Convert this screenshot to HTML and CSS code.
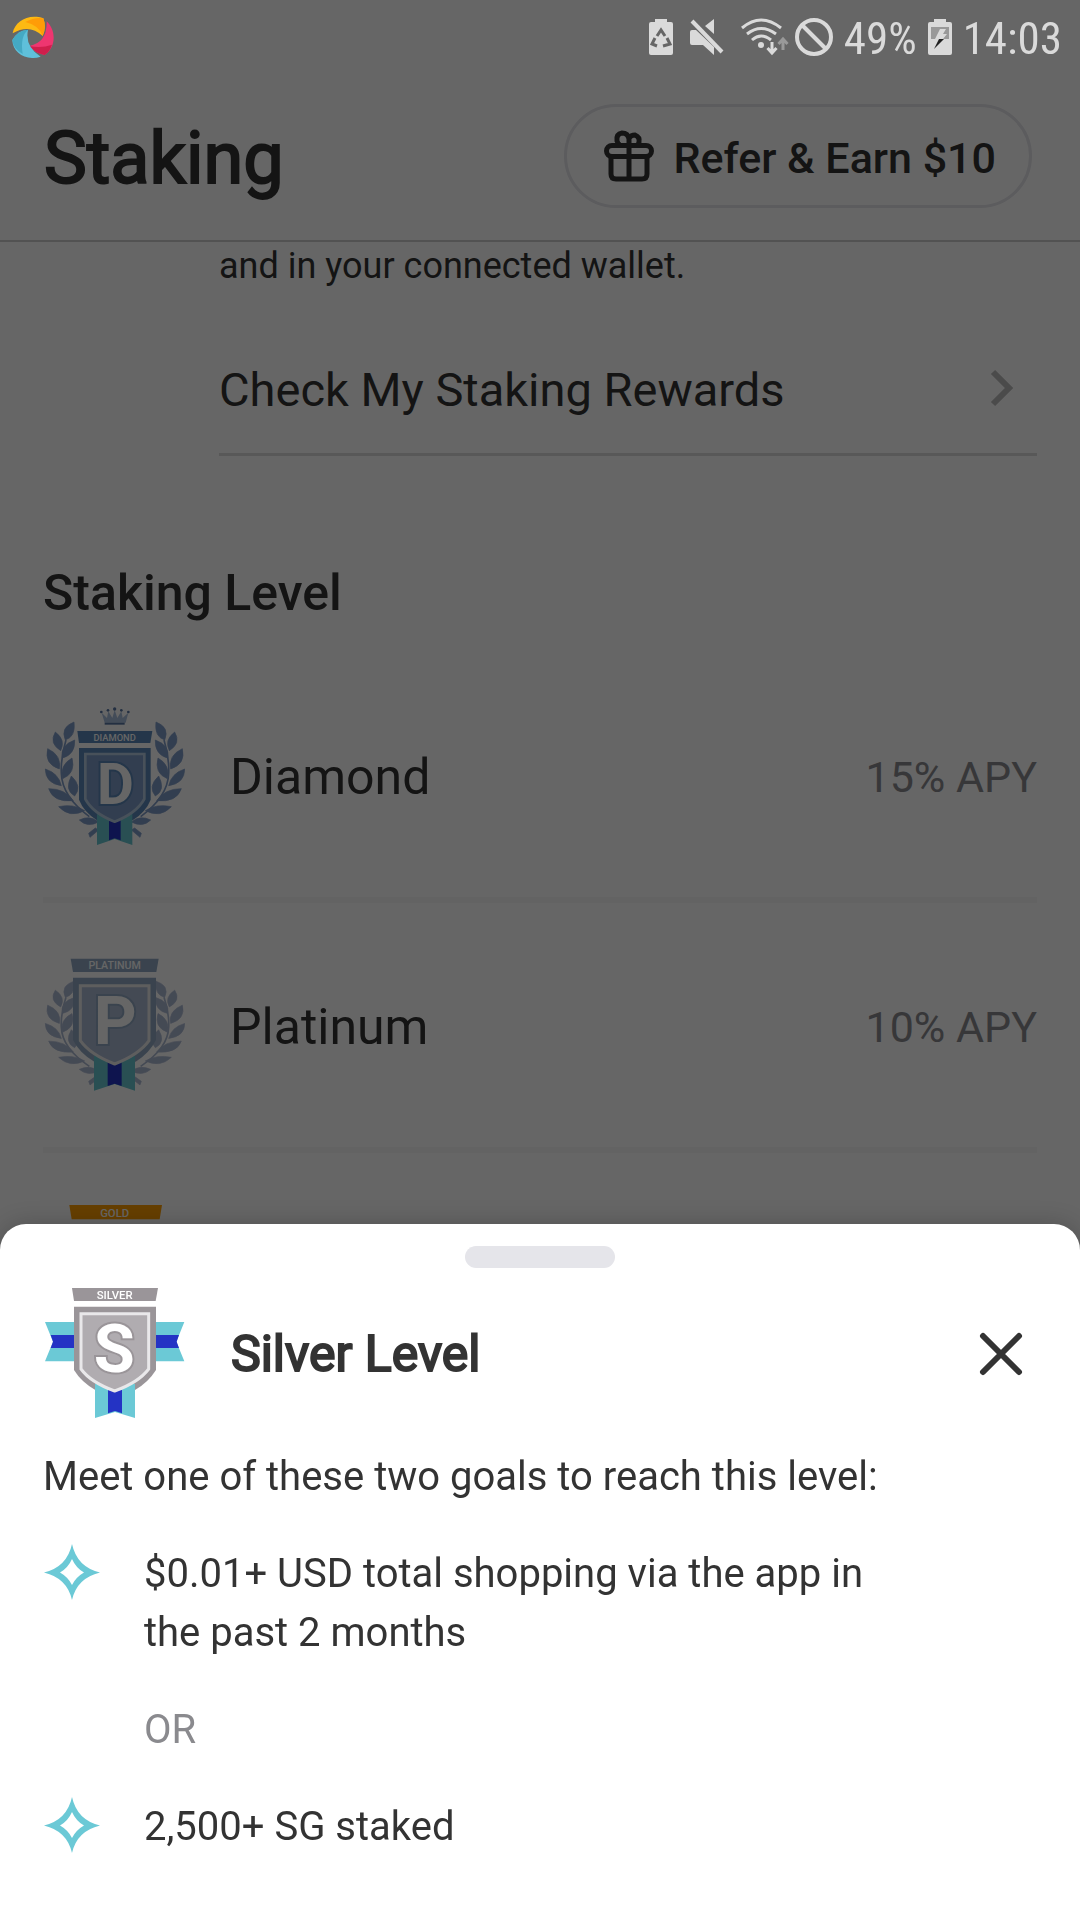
FILE: index.html
```html
<!DOCTYPE html>
<html lang="en">
<head>
<meta charset="utf-8">
<meta name="viewport" content="width=device-width, initial-scale=1">
<title>Staking</title>
<link rel="stylesheet" href="styles.css">
</head>
<body>
<svg class="defs" aria-hidden="true">
  <defs>
    <g id="laurel">
      <path d="M178 380Q96 320 94 250Q92 200 108 150" fill="none" stroke="currentColor" stroke-width="5"/>
      <path d="M132 96Q90 112 106 150Q138 140 132 96ZM76 126Q56 160 92 182Q108 150 76 126ZM134 150Q90 166 97 204Q136 194 134 150ZM53 176Q42 222 88 237Q96 196 53 176ZM126 204Q88 226 98 266Q138 250 126 204ZM46 237Q46 280 94 287Q86 250 46 237ZM124 258Q102 300 134 318Q158 290 124 258ZM56 296Q70 338 130 332Q106 296 56 296ZM86 350Q120 386 164 362Q130 340 86 350ZM148 390Q172 414 206 396Q180 374 148 390ZM176 430L196 414L206 420L180 442Z" fill="currentColor" stroke="currentColor" stroke-width="2"/>
    </g>
  </defs>
</svg>

<div class="status">
  <svg class="status-logo" viewBox="0 0 126 126" aria-hidden="true">
    <path d="M2 52C8 16 50-8 94 7Q104 34 92 60Q52 22 2 52Z" fill="#fdb913"/>
    <path d="M40 18Q70 2 94 7Q104 34 92 60Q82 28 40 18Z" fill="#ff9c07"/>
    <path d="M104 16C132 42 134 92 98 117Q70 112 52 90Q106 80 104 16Z" fill="#ee3670"/>
    <path d="M52 90Q88 98 120 86Q114 106 98 117Q70 112 52 90Z" fill="#cf1f4c"/>
    <path d="M1 72Q20 40 48 42Q38 92 86 122C44 136 2 112 1 72Z" fill="#5fc0da"/>
    <path d="M1 72Q20 40 48 42Q24 60 32 114Q3 98 1 72Z" fill="#45a9c3"/>
  </svg>
  <div class="status-icons">
    <svg class="i-batt" viewBox="0 0 24 36" aria-hidden="true"><path d="M6 0h12v3h4q2 0 2 2v29q0 2-2 2H2q-2 0-2-2V5q0-2 2-2h4z" fill="#dadada"/><path d="M8 17l4-6 4 6M6 19l-3 6 5 2M18 19l3 6-7 2" fill="none" stroke="#666" stroke-width="3"/></svg>
    <svg class="i-mute" viewBox="0 0 34 36" aria-hidden="true"><path d="M0 13q0-2 2-2h4l18 17v8l-11-10H2q-2 0-2-2zM24 0v15l-9-8z" fill="#dadada"/><path d="M2 2l30 31" stroke="#dadada" stroke-width="4"/></svg>
    <div class="network">
      <svg class="i-wifi" viewBox="0 0 48 38" aria-hidden="true"><g fill="none" stroke="#dadada" stroke-width="3"><path d="M1 10Q20-6 40 10M6 16Q20 5 35 16M11 22Q20 14 30 22"/><path d="M31 24v11M26.500 30l4.500 5 4.500-5"/></g><circle cx="20" cy="27" r="3" fill="#dadada"/><path d="M42 32V21M37.500 26l4.500-5 4.500 5" fill="none" stroke="#999" stroke-width="3"/></svg>
      <svg class="i-block" viewBox="0 0 38 38" aria-hidden="true"><g fill="none" stroke="#dadada" stroke-width="4"><circle cx="19" cy="19" r="17"/><path d="M7 7l24 24"/></g></svg>
    </div>
    <span class="status-text">49%</span>
    <svg class="i-batt" viewBox="0 0 24 36" aria-hidden="true"><path d="M6 0h12v3h4q2 0 2 2v29q0 2-2 2H2q-2 0-2-2V5q0-2 2-2h4z" fill="#dadada"/><path d="M3 8h18v12H3z" fill="#999"/><path d="M12 10h6l-3 5h4l-4 5H7z" fill="#dadada"/><path d="M11 20h5L6 30z" fill="#222"/></svg>
    <span class="status-text">14:03</span>
  </div>
</div>

<header class="header">
  <h1>Staking</h1>
  <button class="refer" type="button">
    <svg viewBox="0 0 50 52" aria-hidden="true"><g fill="none" stroke="#333" stroke-width="5"><rect x="2.500" y="15.500" width="45" height="11" rx="5.500"/><path d="M7 26v18q0 5 5 5h26q5 0 5-5V26M25 15v34M25 15V9q-1-6-7-6-6 1-5 8 1 3 3 4M25 8q2-3 6-3 5 2 4 7 0 2-2 3"/></g></svg>
    <span>Refer &amp; Earn $10</span>
  </button>
</header>

<main class="content">
  <section class="rewards">
    <p>and in your connected wallet.</p>
    <a class="rewards-link" href="#rewards"><span>Check My Staking Rewards</span>
      <svg viewBox="0 0 24 38" aria-hidden="true"><path d="M3 3l16 16L3 35" fill="none" stroke="#bbb" stroke-width="6"/></svg>
    </a>
  </section>
  <h2>Staking Level</h2>
  <ul class="levels">
    <li>
      <svg class="badge" viewBox="39 45 426 420" aria-hidden="true">
        <g color="#7e9bc7"><use href="#laurel"/><use href="#laurel" transform="matrix(-1 0 0 1 510 0)"/></g>
        <path d="M224 98L215 68l16 16 4-20 12 20 7-24 8 24 12-20 4 20 17-16-8 30z" fill="#a8bedb"/><path d="M224 98h60v6h-60z" fill="#5876a3"/>
        <g fill="#5876a3"><circle cx="214" cy="66" r="4"/><circle cx="234" cy="61" r="4"/><circle cx="254" cy="57" r="5"/><circle cx="274" cy="61" r="4"/><circle cx="295" cy="66" r="4"/></g>
        <path d="M142 123h225l-6 36H147z" fill="#5a88b8"/>
        <path d="M147 174h215v155q-14 36-54 62H201q-40-26-54-62z" fill="#5a88b8"/>
        <path d="M201 370h106v95l-53-18-53 18z" fill="#66c5cf"/><path d="M237 386h35v65l-18-6-17 6z" fill="#2433c4"/>
        <path d="M166 192h177v135q-24 43-89 68-65-25-88-68z" fill="#7e9bc7" stroke="#b4cbe0" stroke-width="8"/>
        <text x="254" y="152" class="badge-name">DIAMOND</text>
        <text x="256" y="342" class="badge-letter" stroke="#5a88b8">D</text>
      </svg>
      <span class="level-name">Diamond</span><span class="apy">15% APY</span>
    </li>
    <li>
      <svg class="badge" viewBox="39 45 426 420" aria-hidden="true">
        <g color="#abb8d2"><use href="#laurel" y="10" transform="translate(0 28) scale(1 .9)"/><use href="#laurel" y="10" transform="matrix(-1 0 0 .9 510 28)"/></g>
        <path d="M122 56h264l-7 40H129z" fill="#91a9c2"/>
        <path d="M129 113h249v187q-20 40-61 65H193q-44-25-64-65z" fill="#91a9c2"/>
        <path d="M192 348h123v104l-61-20-62 20z" fill="#66c5cf"/><path d="M233 366h42v72l-21-7-21 7z" fill="#2433c4"/>
        <path d="M151 137h206v165q-30 42-103 70-73-28-103-70z" fill="#abb8d2" stroke="#ececec" stroke-width="9"/>
        <text x="254" y="88" class="badge-name badge-name-medium">PLATINUM</text>
        <text x="256" y="312" class="badge-letter badge-letter-large" stroke="#91a9c2">P</text>
      </svg>
      <span class="level-name">Platinum</span><span class="apy">10% APY</span>
    </li>
    <li>
      <svg class="badge" viewBox="39 45 426 420" aria-hidden="true">
        <path d="M118 45h278l-7 43H125z" fill="#ff9f00"/>
        <path d="M129 113h249v187q-20 40-124 85-105-45-125-85z" fill="#ff9f00"/>
        <text x="254" y="80" class="badge-name badge-name-large">GOLD</text>
      </svg>
      <span class="level-name">Gold</span><span class="apy">5% APY</span>
    </li>
  </ul>
</main>

<div class="scrim"></div>

<section class="sheet" role="dialog" aria-labelledby="sheet-title">
  <div class="handle"></div>
  <div class="sheet-head">
    <svg class="badge" viewBox="39 282 426 420" aria-hidden="true">
      <path d="M45 396h120v118H45l24-59zM463 396H343v118h120l-24-59z" fill="#6bc9d6"/>
      <path d="M62 435h90v39H62l7-19zM447 435h-90v39h90l-7-19z" fill="#2433c4"/>
      <path d="M126 294h258l-7 39H132z" fill="#9a9599"/>
      <path d="M132 350h246v190q-24 38-63 60H196q-42-24-64-60z" fill="#9a9599"/>
      <path d="M195 582h120v102l-60-18-60 18z" fill="#6bc9d6"/><path d="M234 600h42v70l-21-7-21 7z" fill="#2433c4"/>
      <path d="M153 371h203v166q-30 40-102 66-72-26-101-66z" fill="#b0acb0" stroke="#e9e8ea" stroke-width="9"/>
      <text x="254" y="327" class="badge-name badge-name-large">SILVER</text>
      <text x="253" y="546" class="badge-letter badge-letter-large" stroke="#9a9599">S</text>
    </svg>
    <h2 id="sheet-title">Silver Level</h2>
    <button class="close" type="button" aria-label="Close"><svg viewBox="0 0 44 44" aria-hidden="true"><path d="M4 4l36 36M40 4L4 40" stroke="#333" stroke-width="6" stroke-linecap="round"/></svg></button>
  </div>
  <p class="intro">Meet one of these two goals to reach this level:</p>
  <ul class="goals">
    <li><svg class="star" viewBox="0 0 58 56" aria-hidden="true"><path transform="translate(1)" fill-rule="evenodd" d="M28 0Q33 23 56 28.500Q33 34 28 56Q23 34 0 28.500Q23 23 28 0ZM28 15Q24 24 16 28.500Q24 33 28 41Q32 33 40 28.500Q32 24 28 15Z" fill="#6bc9d6"/></svg><span>$0.01+ USD total shopping via the app in the past 2 months</span></li>
    <li class="or">OR</li>
    <li><svg class="star" viewBox="0 0 58 56" aria-hidden="true"><path transform="translate(1)" fill-rule="evenodd" d="M28 0Q33 23 56 28.500Q33 34 28 56Q23 34 0 28.500Q23 23 28 0ZM28 15Q24 24 16 28.500Q24 33 28 41Q32 33 40 28.500Q32 24 28 15Z" fill="#6bc9d6"/></svg><span>2,500+ SG staked</span></li>
  </ul>
</section>
</body>
</html>
```
FILE: styles.css
```css
* { box-sizing: border-box; }
html, body { height: 100%; }
body {
  margin: 0;
  overflow: hidden;
  background: #fff;
  color: #333;
  font-family: Roboto, "Liberation Sans", sans-serif;
}
h1, h2, p, ul { margin: 0; padding: 0; }
ul { list-style: none; }
svg { display: block; flex: none; }
button { font: inherit; color: inherit; background: none; cursor: pointer; }
.defs { position: absolute; width: 0; height: 0; }

/* Device status bar stays above the scrim */
.status {
  position: relative;
  z-index: 3;
  display: flex;
  justify-content: space-between;
  align-items: center;
  height: 74px;
  padding: 0 18px 0 12px;
}
.status-logo { width: 42px; height: 42px; }
.status-icons { display: flex; align-items: center; gap: 11px; color: #dadada; }
.status-text { padding-top: 4px; font-family: "Roboto Condensed", Roboto, sans-serif; font-size: 45px; line-height: 70px; }
.network { display: flex; gap: 6px; }
.i-batt { width: 24px; height: 36px; }
.i-mute { width: 34px; height: 36px; margin: 0 6px; }
.i-wifi { width: 48px; height: 38px; }
.i-block { width: 38px; height: 38px; }

.header {
  display: flex;
  justify-content: space-between;
  align-items: center;
  height: 168px;
  padding: 0 48px 2px 44px;
  border-bottom: 2px solid #ccc;
}
/* Titles: regular letterforms, thickened by an outline */
h1, .sheet-head h2 { font-weight: 400; -webkit-text-stroke: 2px currentColor; }
h1 { padding-top: 6px; font-size: 72px; line-height: 84px; }
.refer {
  display: flex;
  align-items: center;
  gap: 19px;
  height: 104px;
  padding: 0 33px 0 37px;
  border: 3px solid #e5e5ea;
  border-radius: 52px;
  font-size: 43px;
  font-weight: 500;
  white-space: nowrap;
}
.refer span { padding-top: 4px; }
.refer svg { width: 50px; height: 52px; }

.content { padding: 0 43px; }
.rewards { padding-left: 176px; }
.rewards p { font-size: 36px; line-height: 48px; }
.rewards-link {
  display: flex;
  align-items: center;
  justify-content: space-between;
  height: 166px;
  padding: 32px 23px 0 0;
  border-bottom: 3px solid #ddd;
  color: inherit;
  font-size: 47px;
  text-decoration: none;
}
.rewards-link span { padding-top: 4px; }
.rewards-link svg { width: 24px; height: 38px; }
.content h2 { margin-top: 107px; font-size: 50px; line-height: 60px; font-weight: 500; }
.levels { margin-top: 30px; }
.levels li { display: flex; align-items: center; height: 250px; border-bottom: 6px solid #f7f7f8; }
.badge { width: 142px; height: 140px; }
.badge-name { fill: #fff; font-size: 28px; font-weight: 500; text-anchor: middle; }
.badge-name-medium { font-size: 32px; }
.badge-name-large { font-size: 34px; }
.badge-letter { fill: #fff; font-size: 170px; font-weight: 700; text-anchor: middle; stroke-width: 12px; paint-order: stroke; }
.badge-letter-large { font-size: 200px; }
.level-name, .apy { padding-top: 4px; }
.level-name { flex: 1; margin-left: 45px; font-size: 50px; }
.apy { color: #8a8a8e; font-size: 43px; }

.scrim { position: fixed; inset: 0; z-index: 1; background: rgba(0, 0, 0, 0.6); }

.sheet {
  position: fixed;
  right: 0;
  bottom: 0;
  left: 0;
  z-index: 2;
  padding: 22px 43px 64px;
  border-radius: 26px 26px 0 0;
  background: #fff;
  box-shadow: 0 0 24px rgba(0, 0, 0, 0.2);
}
.handle { width: 150px; height: 22px; margin: 0 auto; border-radius: 11px; background: #e5e5ea; }
.sheet-head { display: flex; align-items: center; margin-top: 16px; }
.sheet-head h2 { flex: 1; margin-left: 46px; font-size: 50px; line-height: 60px; }
.close { padding: 14px; border: 0; }
.close svg { width: 44px; height: 44px; }
.intro { margin-top: 23px; font-size: 40px; line-height: 60px; }
.goals { display: grid; gap: 38px; margin-top: 37px; font-size: 40px; line-height: 59px; }
.goals li { display: flex; gap: 43px; padding-right: 160px; }
.goals .or { padding-left: 101px; color: #8a8a8e; }
.star { width: 58px; height: 56px; }
```
